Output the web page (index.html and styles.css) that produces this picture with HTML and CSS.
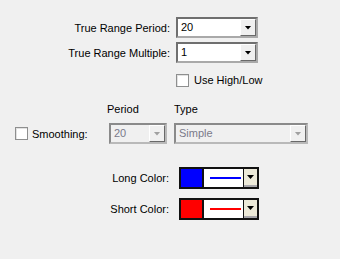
FILE: index.html
```html
<!DOCTYPE html>
<html lang="en">
<head>
  <meta charset="UTF-8" />
  <title>True Range Settings</title>
  <link rel="stylesheet" href="styles.css">
</head>
<body>
  <div class="panel">
    <div class="field">
      <span class="field-label">True Range Period:</span>
      <div class="combo">
        <span class="combo-value">20</span>
        <span class="combo-btn"><span class="arrow"></span></span>
      </div>
    </div>
    <div class="field">
      <span class="field-label">True Range Multiple:</span>
      <div class="combo">
        <span class="combo-value">1</span>
        <span class="combo-btn"><span class="arrow"></span></span>
      </div>
    </div>

    <label class="check-row">
      <span class="checkbox"></span>
      <span>Use High/Low</span>
    </label>

    <div class="smoothing">
      <span></span>
      <span class="col-head">Period</span>
      <span class="col-head">Type</span>

      <label class="smooth-check">
        <span class="checkbox"></span>
        <span>Smoothing:</span>
      </label>
      <div class="combo disabled small">
        <span class="combo-value">20</span>
        <span class="combo-btn"><span class="arrow"></span></span>
      </div>
      <div class="combo disabled wide">
        <span class="combo-value">Simple</span>
        <span class="combo-btn"><span class="arrow"></span></span>
      </div>
    </div>

    <div class="color-row">
      <span class="color-label">Long Color:</span>
      <div class="color-combo">
        <span class="swatch blue"></span>
        <span class="line-area"><span class="line blue"></span></span>
        <span class="color-btn"><span class="arrow"></span></span>
      </div>
    </div>
    <div class="color-row">
      <span class="color-label">Short Color:</span>
      <div class="color-combo">
        <span class="swatch red"></span>
        <span class="line-area"><span class="line red"></span></span>
        <span class="color-btn"><span class="arrow"></span></span>
      </div>
    </div>
  </div>
</body>
</html>
```

FILE: styles.css
```css
body {
  margin: 0;
  background-color: #f0f0f0;
  font-family: "Liberation Sans", Arial, sans-serif;
  font-size: 11px;
  color: #000;
}

.panel {
  width: 340px;
  height: 259px;
  padding-top: 17px;
  box-sizing: border-box;
}

.field {
  display: flex;
  align-items: center;
  height: 21px;
}

.field + .field {
  margin-top: 4px;
}

.field-label {
  width: 170px;
  text-align: right;
  margin-right: 6px;
}

.combo {
  display: flex;
  width: 82px;
  height: 21px;
  box-sizing: border-box;
  border: 2px solid;
  border-color: #6f6f6f #a9a9a9 #a9a9a9 #6f6f6f;
  background: #fff;
}

.combo-value {
  flex: 1;
  padding-left: 3px;
  line-height: 17px;
}

.combo-btn {
  display: flex;
  align-items: center;
  justify-content: center;
  width: 16px;
  box-sizing: border-box;
  background: #f0f0f0;
  border: 1px solid;
  border-color: #fff #696969 #696969 #fff;
}

.arrow {
  width: 7px;
  height: 4px;
  background: #000;
  clip-path: polygon(0 0, 100% 0, 50% 100%);
}

.combo.disabled {
  background: #f0f0f0;
  border-color: #8a8a8a #b9b9b9 #b9b9b9 #8a8a8a;
  color: #7a7a8a;
}

.combo.disabled .arrow {
  background: #a0a0a0;
}

.combo.small {
  width: 58px;
  margin-left: 2px;
}

.combo.wide {
  width: 134px;
}

.check-row {
  display: flex;
  align-items: center;
  gap: 5px;
  margin: 10px 0 0 176px;
  height: 14px;
}

.checkbox {
  display: inline-block;
  width: 13px;
  height: 13px;
  box-sizing: border-box;
  background: #fff;
  border: 1px solid #8e8f8f;
  box-shadow: inset 1px 1px #e2e2e2;
}

.smoothing {
  display: grid;
  grid-template-columns: 107px 67px 134px;
  row-gap: 7px;
  margin-top: 15px;
  align-items: center;
}

.col-head {
  line-height: 14px;
}

.smooth-check {
  display: flex;
  align-items: center;
  gap: 4px;
  padding-left: 15px;
}

.color-row {
  display: flex;
  align-items: center;
  margin-top: 23px;
  height: 22px;
}

.color-row + .color-row {
  margin-top: 9px;
}

.color-label {
  width: 169px;
  text-align: right;
  margin-right: 10px;
}

.color-combo {
  display: flex;
  width: 80px;
  height: 22px;
  box-sizing: border-box;
  border: 2px solid #111;
  background: #fff;
}

.swatch {
  width: 21px;
  border-right: 2px solid #111;
}

.swatch.blue, .line.blue {
  background: #0000ff;
}

.swatch.red, .line.red {
  background: #ff0000;
}

.line-area {
  display: flex;
  align-items: center;
  width: 40px;
  padding: 0 2px 0 6px;
  box-sizing: border-box;
  border-right: 1px solid #111;
}

.line {
  flex: 1;
  height: 2px;
}

.color-btn {
  flex: 1;
  display: flex;
  align-items: center;
  justify-content: center;
  background: #ece9d8;
  border-bottom: 2px solid #a7a6aa;
}
```
